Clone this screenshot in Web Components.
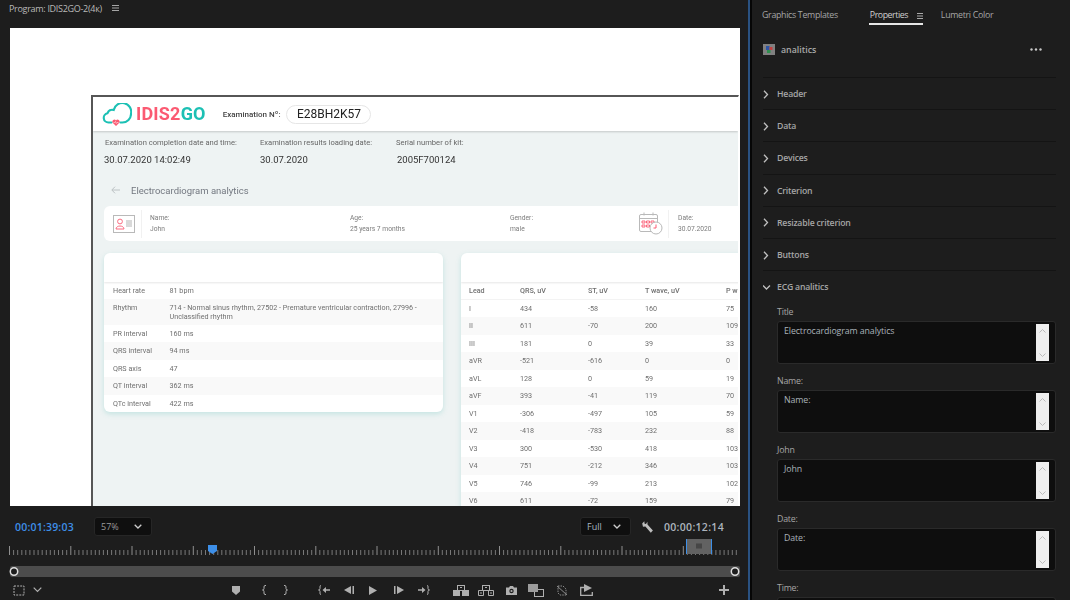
<!DOCTYPE html>
<html><head><meta charset="utf-8"><title>Program monitor</title>
<style>
html,body{margin:0;padding:0;background:#1d1d1d;width:1070px;height:600px;overflow:hidden}
body{font-family:"Open Sans","Liberation Sans",sans-serif}
</style></head>
<body>
<app-shell>
  <program-monitor slot="left" title-text="Program: IDIS2GO-2(4к)">
    <idis-page></idis-page>
  </program-monitor>
  <transport-bar slot="left"></transport-bar>
  <properties-panel slot="right">
    <prop-section name="Header"></prop-section>
    <prop-section name="Data"></prop-section>
    <prop-section name="Devices"></prop-section>
    <prop-section name="Criterion"></prop-section>
    <prop-section name="Resizable criterion"></prop-section>
    <prop-section name="Buttons"></prop-section>
    <prop-section name="ECG analitics" open>
      <prop-field label="Title" value="Electrocardiogram analytics"></prop-field>
      <prop-field label="Name:" value="Name:"></prop-field>
      <prop-field label="John" value="John"></prop-field>
      <prop-field label="Date:" value="Date:"></prop-field>
      <prop-field label="Time:" value=""></prop-field>
    </prop-section>
  </properties-panel>
</app-shell>
<script>
function def(name, html, init){
  customElements.define(name, class extends HTMLElement{
    connectedCallback(){
      if(this.shadowRoot) return;
      const r=this.attachShadow({mode:'open'});
      r.innerHTML = typeof html==='function' ? html(this) : html;
      if(init) init(r,this);
    }
  });
}
const esc=s=>(s||'').replace(/&/g,'&amp;').replace(/</g,'&lt;');

def('app-shell',`<style>
:host{display:flex;width:1070px;height:600px;background:#1d1d1d;overflow:hidden}
.l{width:748px;flex:none;display:flex;flex-direction:column}
.div{width:4px;flex:none;display:flex}
.div i{display:block;width:2px;background:#2a5282}
.div b{display:block;width:2px;background:#060606}
.r{flex:1;min-width:0}
</style><div class="l"><slot name="left"></slot></div><div class="div"><i></i><b></b></div><div class="r"><slot name="right"></slot></div>`);

def('program-monitor',h=>`<style>
:host{display:block;font-family:"Open Sans",sans-serif}
.t{height:28px;box-sizing:border-box;padding:2px 0 0 9px;display:flex;align-items:flex-start;gap:10px;color:#b9b9b9;font-size:9px;line-height:13px;letter-spacing:-.3px}
.t svg{margin-top:3px;flex:none}
.m{margin-left:10px;width:730px;height:478px;background:#fff;box-sizing:border-box;padding:67px 0 0 81px;overflow:hidden}
</style><div class="t"><span>${esc(h.getAttribute('title-text'))}</span>
<svg width="7" height="6" viewBox="0 0 7 6"><path d="M0 .5h7M0 3h7M0 5.500h7" stroke="#a5a5a5"/></svg></div>
<div class="m"><slot></slot></div>`);

def('idis-page',`<style>
:host{display:block;width:648px;height:411px;box-sizing:border-box;border-left:2px solid #565656;border-top:2px solid #565656;border-right:1.500px solid #fff;background:#eef3f3;font-family:Roboto,sans-serif;overflow:hidden;color:#666;filter:blur(.35px)}
.head{height:34px;background:#fff;box-sizing:border-box;display:flex;align-items:center;padding:0 0 0 9px;box-shadow:0 1px 2px rgba(0,0,0,.18)}
.word{font:700 18px/1 Roboto,sans-serif;color:#fb5a72;margin-left:4px;letter-spacing:.2px}
.word span{color:#1cc0b4}
.exn{margin-left:17px;font-size:8px;font-weight:500;color:#444}
.pill{margin-left:6px;width:85px;height:19px;border:1px solid #e6e6e6;border-radius:10px;box-sizing:border-box;display:flex;align-items:center;justify-content:center;font-size:12px;color:#222}
.info{display:flex;padding:6px 0 0 12px;height:53px;box-sizing:border-box}
.info div{font-size:7.600px;color:#666;line-height:12px}
.info b{display:block;font-weight:400;font-size:9.500px;color:#333;margin-top:5px;line-height:12px}
.info div:nth-child(1) b{margin-left:-1px}
.info div:nth-child(3) b{margin-left:1px}
.info div:nth-child(1){width:155px}.info div:nth-child(2){width:136px}
.title{display:flex;align-items:center;height:14px;margin:0 0 0 18px;font-size:9.500px;color:#737880;gap:11px;position:relative;top:-1px}
.pat{margin:8px 0 0 11px;width:700px;height:35px;background:#fff;border-radius:6px;box-sizing:border-box;display:flex;align-items:center;padding-left:9px;font-size:6.700px;color:#7d7d7d;line-height:10.500px}
.pat .sep{width:1px;height:28px;background:#f1f1f1;margin:0 8px 0 6px}
.pat .col b{display:block;font-weight:400}
.tables{display:grid;grid-template-columns:339px 400px;gap:18px;margin:12px 0 0 11px;align-items:start}
</style>
<div class="head">
<svg width="30" height="23" viewBox="0 0 30 23" fill="none"><path d="M9.500 19.500H6.500a4.700 4.700 0 0 1-1-9.300 5 5 0 0 1 6.200-3.300A8.600 8.600 0 0 1 29 10.800a8.600 8.600 0 0 1-8.600 8.700h-2" stroke="#1cc0b4" stroke-width="2.100" stroke-linecap="round"/><path d="M14 23l-3.300-3.300a2 2 0 0 1 3.300-2.300 2 2 0 0 1 3.300 2.300z" fill="#fb5a72"/><path d="M11.500 19.500h1.300l.7-1 .8 2 .7-1h1.500" stroke="#fff" stroke-width=".5"/></svg>
<div class="word">IDIS2<span>GO</span></div>
<div class="exn">Examination Nº:</div>
<div class="pill">E28BH2K57</div>
</div>
<div class="info">
<div>Examination completion date and time:<b>30.07.2020 14:02:49</b></div>
<div>Examination results loading date:<b>30.07.2020</b></div>
<div>Serial number of kit:<b>2005F700124</b></div>
</div>
<div class="title"><svg width="9" height="8" viewBox="0 0 9 8" fill="none"><path d="M9 4H1M4 .7 .8 4 4 7.300" stroke="#bcc2c4"/></svg><span>Electrocardiogram analytics</span></div>
<div class="pat">
<svg width="22" height="18" viewBox="0 0 22 18" fill="none"><rect x=".5" y=".5" width="21" height="17" fill="#fff" stroke="#b9b9b9"/><circle cx="7" cy="6.500" r="2.400" stroke="#fb6b80"/><path d="M3 14c0-4 8-4 8 0z" stroke="#fb6b80"/><rect x="13" y="5" width="6" height="7" fill="#d9d9d9"/></svg>
<div class="sep"></div>
<div class="col" style="width:200px">Name:<b>John</b></div>
<div class="col" style="width:160px">Age:<b>25 years 7 months</b></div>
<div class="col" style="width:129px">Gender:<b>male</b></div>
<svg width="24" height="23" viewBox="0 0 24 23" fill="none"><rect x=".5" y="2.500" width="18" height="17" rx="1.500" fill="#fff" stroke="#b9b9b9"/><path d="M.5 6.500h18M5 .5v3M14 .5v3" stroke="#b9b9b9"/><path d="M3 9h3v2H3zM7.500 9h3v2h-3zM12 9h3v2h-3zM3 13h3v2H3zM7.500 13h3v2h-3z" stroke="#fb5a72" stroke-width=".9"/><circle cx="17" cy="16" r="6" fill="#fff" stroke="#b9b9b9"/><path d="M17 12.500V16h-2.500" stroke="#fb5a72"/></svg>
<div class="sep" style="margin:0 9px 0 5px"></div>
<div class="col" style="width:60px">Date:<b>30.07.2020</b></div>
</div>
<div class="tables"><kv-table></kv-table><lead-table></lead-table></div>`);

const cardCss=`:host{display:block;background:#fff;border-radius:6px;overflow:hidden;box-shadow:0 2px 5px rgba(120,200,195,.35);font:7.200px/9px Roboto,sans-serif;color:#6f6f6f}
.h{height:28.500px;box-shadow:0 1px 2px rgba(0,0,0,.1);position:relative}
.row{display:flex;align-items:center;box-sizing:border-box;height:17.500px;padding-left:9px}
.row.s{background:#f9f9f9}`;
def('kv-table',h=>{
 const d=[['Heart rate','81 bpm'],['Rhythm','714 - Normal sinus rhythm, 27502 - Premature ventricular contraction, 27996 - Unclassified rhythm'],['PR interval','160 ms'],['QRS interval','94 ms'],['QRS axis','47'],['QT interval','362 ms'],['QTc interval','422 ms']];
 return `<style>${cardCss}
 .row span:first-child{width:56.500px;flex:none}.row span:last-child{width:262px}
 .row.tall{height:25.500px;align-items:flex-start;padding-top:4px}</style><div class="h"></div>`+d.map((r,i)=>`<div class="row ${i%2?'s':''} ${i==1?'tall':''}"><span>${r[0]}</span><span>${r[1]}</span></div>`).join('');
});
def('lead-table',h=>{
 const d=`I 434 -58 160 75|II 611 -70 200 109|III 181 0 39 33|aVR -521 -616 0 0|aVL 128 0 59 19|aVF 393 -41 119 70|V1 -306 -497 105 59|V2 -418 -783 232 88|V3 300 -530 418 103|V4 751 -212 346 103|V5 746 -99 213 102|V6 611 -72 159 79`.split('|').map(s=>s.split(' '));
 const c=r=>r.map(x=>`<span>${x}</span>`).join('');
 return `<style>${cardCss}
 :host{height:300px}
 .row span:nth-child(1){width:51px}.row span:nth-child(2){width:68px}.row span:nth-child(3){width:57px}.row span:nth-child(4){width:81px}.row span{flex:none;white-space:nowrap}
 .hd{font-weight:500;height:18px;border-bottom:1px solid #f3f3f3;padding-left:8px}.row{padding-left:8px}
 </style><div class="h"></div><div class="row hd">${c(['Lead','QRS, uV','ST, uV','T wave, uV','P wave, uV'])}</div>`+d.map((r,i)=>`<div class="row ${i%2?'s':''}">${c(r)}</div>`).join('');
});

def('transport-bar',`<style>
:host{display:block;height:94px;box-sizing:border-box;padding-top:11px;font-family:"Open Sans",sans-serif;color:#a8a8a8}
.top{display:flex;align-items:center;height:19px;padding-left:15px}
.tc{font-size:10.500px;font-weight:600;width:79px;letter-spacing:.2px}
.blue{color:#3d8fe8}
.dd{height:19px;background:#0f0f0f;border:1px solid #262626;border-radius:3px;box-sizing:border-box;display:flex;align-items:center;justify-content:space-between;padding:0 9px 0 6px;font-size:9px;color:#9a9a9a}
.gap{flex:1}
.tr{margin-left:11px;width:11px;height:12px;flex:none}
.tc2{margin-left:11px;width:70px;color:#adb5bd;font-weight:600;font-size:10.500px;letter-spacing:.3px;white-space:nowrap}
.ruler{display:block;margin-top:3px}
.sb{display:block;margin-top:10px}
.tools{display:flex;align-items:center;height:18px;margin-top:4px;padding-left:13px;width:735px;box-sizing:border-box}
.tools svg{flex:none;display:block}
</style>
<div class="top"><div class="tc blue">00:01:39:03</div>
<div class="dd" style="width:58px"><span>57%</span><svg width="8" height="5" viewBox="0 0 8 5" fill="none"><path d="M.7.700 4 4l3.300-3.300" stroke="#ccc" stroke-width="1.300"/></svg></div>
<div class="gap"></div>
<div class="dd" style="width:51px;color:#a9b4c0"><span>Full</span><svg width="8" height="5" viewBox="0 0 8 5" fill="none"><path d="M.7.700 4 4l3.300-3.300" stroke="#ccc" stroke-width="1.300"/></svg></div>
<svg class="tr" viewBox="0 0 11 12"><path d="M.2 2.600 2.300.3l.3 2.400 1.400.4L5.400.8 5.500 3.400l5.400 6-2.100 2.300-5.400-6.100-2.400.1z" fill="#bdbdbd"/></svg>
<div class="tc2">00:00:12:14</div><div style="width:14px"></div></div>
<svg id="ruler" class="ruler" width="748" height="17" viewBox="0 0 748 17"></svg>
<svg class="sb" width="748" height="11" viewBox="0 0 748 11"><rect x="10" width="730" height="11" rx="2" fill="#4c4c4c"/><circle cx="14" cy="5.500" r="3.700" fill="#1d1d1d" stroke="#e0e0e0" stroke-width="1.500"/><circle cx="735" cy="5.500" r="3.700" fill="#1d1d1d" stroke="#e0e0e0" stroke-width="1.500"/></svg>
<div class="tools">
<svg width="12" height="11" viewBox="0 0 12 11" fill="none" style="margin-right:8px"><path d="M1 1h10v9H1z" stroke="#b0b0b0" stroke-dasharray="2 1.100"/></svg>
<svg width="9" height="6" viewBox="0 0 9 6" fill="none" style="margin-right:190px"><path d="M.7.700 4.500 4.500 8.300.700" stroke="#b0b0b0" stroke-width="1.200"/></svg>
<svg width="8" height="9" viewBox="0 0 8 9" style="margin-right:22px"><path d="M0 0h8v5.500L4 9 0 5.500z" fill="#b0b0b0"/></svg>
<svg width="5" height="10" viewBox="0 0 5 10" fill="none" style="margin-right:16px"><path d="M4 .5H3Q2 .5 2 2v1.500Q2 5 .5 5 2 5 2 6.500V8q0 1.500 1 1.500h1" stroke="#b0b0b0"/></svg>
<svg width="5" height="10" viewBox="0 0 5 10" fill="none" style="margin-right:30px"><path d="M1 .5h1Q3 .5 3 2v1.500Q3 5 4.500 5 3 5 3 6.500V8q0 1.500-1 1.500H1" stroke="#b0b0b0"/></svg>
<svg width="12" height="10" viewBox="0 0 12 10" fill="none" style="margin-right:14px"><path d="M3 .5H2.500Q2 .5 2 2v1.500Q2 5 .5 5 2 5 2 6.500V8q0 1.500.5 1.500H3" stroke="#b0b0b0"/><path d="M12 4.300H8V2L4.500 5 8 8V5.700h4z" fill="#b0b0b0"/></svg>
<svg width="10" height="8" viewBox="0 0 10 8" style="margin-right:15px"><path d="M7 0v8L0 4zM8.500 0H10v8H8.500z" fill="#b0b0b0"/></svg>
<svg width="8" height="9" viewBox="0 0 8 9" style="margin-right:17px"><path d="M0 0l8 4.500L0 9z" fill="#b0b0b0"/></svg>
<svg width="10" height="8" viewBox="0 0 10 8" style="margin-right:14px"><path d="M3 0v8l7-4zM0 0h1.500v8H0z" fill="#b0b0b0"/></svg>
<svg width="12" height="10" viewBox="0 0 12 10" fill="none" style="margin-right:23px"><path d="M9 .5h.5Q10 .5 10 2v1.500Q10 5 11.500 5 10 5 10 6.500V8q0 1.500-.5 1.500H9" stroke="#b0b0b0"/><path d="M0 4.300h4V2l3.500 3L4 8V5.700H0z" fill="#b0b0b0"/></svg>
<svg width="16" height="11" viewBox="0 0 16 11" fill="none" style="margin-right:9px"><rect x="4.500" y=".5" width="7" height="5" stroke="#b0b0b0"/><path d="M7 2.500h2" stroke="#b0b0b0"/><path d="M0 5h7v6H0zM9 5h7v6H9z" fill="#b0b0b0"/></svg>
<svg width="16" height="11" viewBox="0 0 16 11" fill="none" style="margin-right:12px"><rect x="4.500" y=".5" width="7" height="5" stroke="#b0b0b0"/><path d="M7 2.500h2" stroke="#b0b0b0"/><path d="M.5 5.500h5v5h-5zM10.500 5.500h5v5h-5z" stroke="#b0b0b0"/><path d="M2 8h2M12 8h2" stroke="#b0b0b0"/></svg>
<svg width="11" height="9" viewBox="0 0 11 9" style="margin-right:11px"><path d="M0 1.500h3L4 0h3l1 1.500h3V9H0z" fill="#b0b0b0"/><circle cx="5.500" cy="5" r="2.200" fill="#1d1d1d"/><circle cx="5.500" cy="5" r="1.100" fill="#b0b0b0"/></svg>
<svg width="16" height="13" viewBox="0 0 16 13" fill="none" style="margin-right:13px"><rect x="6.500" y="5.500" width="9" height="7" stroke="#b0b0b0"/><rect width="10" height="8" fill="#9c9c9c"/></svg>
<svg width="10" height="11" viewBox="0 0 10 11" fill="none" style="margin-right:13px"><path d="M1 1h5l3 3v6H3L1 8z" stroke="#8c8c8c" stroke-dasharray="1.500 1"/><path d="M0 1l10 9" stroke="#8c8c8c"/></svg>
<svg width="13" height="12" viewBox="0 0 13 12" fill="none" style="margin-right:126px"><path d="M4 3.500H.7v7.800h11.600V8" stroke="#b0b0b0" stroke-width="1.300"/><path d="M4 0l8 4-8 4z" fill="#b0b0b0"/></svg>
<svg width="10" height="10" viewBox="0 0 10 10"><path d="M4 0h2v4h4v2H6v4H4V6H0V4h4z" fill="#b0b0b0"/></svg>
</div>`,
(r)=>{
 let s='';
 for(let i=0;i<180;i++){
   const x=9.5+i*61.25/15;
   if(x>740) break;
   const maj=i%15===0;
   s+=`<path d="M${x.toFixed(1)} ${maj?7:11}V16" stroke="#8f8f8f" stroke-width="1" ${maj?'':'opacity=".8"'}/>`;
 }
 s+=`<rect x="686" y="0" width="26" height="15" fill="#626262"/><path d="M686.500 0V15M711.500 0V15" stroke="#3d8fe8"/><path d="M697 4.500v5M699 4.500v5M701 4.500v5" stroke="#2a2a2a"/>`;
 s+=`<path d="M208 6h9v6l-3 2-1.500 1-1.500-1-3-2z" fill="#3d8fe8"/>`;
 r.getElementById('ruler').innerHTML=s;
});

def('properties-panel',`<style>
:host{display:block;height:600px;overflow:hidden;font-family:"Open Sans",sans-serif;color:#a8a8a8}
.tabs{display:flex;height:25px;padding-left:10px;box-sizing:border-box;font-size:8.800px;line-height:12px;letter-spacing:-.3px}
.tab{padding-top:9px;white-space:nowrap;color:#a6a6a6;flex:none}
.on{margin-left:31px;width:54px;border-bottom:2px solid #e6e6e6;box-sizing:border-box;display:flex;color:#cfcfcf;padding-left:1px;letter-spacing:-.45px}
.on span{width:47px;flex:none}
.on svg{margin-top:4px;flex:none}
.asset{display:flex;align-items:center;height:52px;padding:0 28px 3px 11px;box-sizing:border-box;font-size:8.800px;font-weight:600;color:#a9a9a9}
.asset span{margin-left:6px;flex:1}
.asset svg{flex:none}
</style>
<div class="tabs"><div class="tab">Graphics Templates</div><div class="tab on"><span>Properties</span><svg width="6" height="6" viewBox="0 0 6 6"><path d="M0 .5h6M0 3h6M0 5.500h6" stroke="#aaa"/></svg></div><div class="tab" style="margin-left:18px">Lumetri Color</div></div>
<div class="asset"><svg width="12" height="11" viewBox="0 0 12 11"><rect width="12" height="11" fill="#808080"/><rect x="3" y="2" width="3.500" height="4" fill="#2d55a5"/><rect x="6.500" y="3" width="3" height="3" fill="#c24040"/><rect x="4" y="6" width="3.500" height="3" fill="#2f8f4f"/></svg><span>analitics</span><svg width="12" height="3" viewBox="0 0 12 3"><circle cx="1.500" cy="1.500" r="1.200" fill="#c8c8c8"/><circle cx="6" cy="1.500" r="1.200" fill="#c8c8c8"/><circle cx="10.500" cy="1.500" r="1.200" fill="#c8c8c8"/></svg></div>
<slot></slot>`);

def('prop-section',h=>{
 const open=h.hasAttribute('open');
 return `<style>
:host{display:block;margin:0 14px 0 11px;border-top:1px solid #141414}
.h{display:flex;align-items:center;height:31.200px;padding-top:1px;box-sizing:border-box;font-size:8.700px;font-weight:600;color:#a6a6a6;letter-spacing:-.2px}
.h svg{width:14px;flex:none}
.b{padding-left:14px;margin-top:1px}
</style><div class="h"><svg height="9" viewBox="0 0 14 9" fill="none">${open?'<path d="M0 2.500 3.500 6 7 2.500" stroke="#c0c0c0" stroke-width="1.300"/>':'<path d="M1 .8 4.500 4.500 1 8.200" stroke="#c0c0c0" stroke-width="1.300"/>'}</svg><span>${esc(h.getAttribute('name'))}</span></div>${open?'<div class="b"><slot></slot></div>':''}`;
});

def('prop-field',h=>`<style>
:host{display:block;height:69px;font-size:8.800px;color:#a6a6a6}
.l{height:18px;line-height:12px;padding-top:3px;box-sizing:border-box;letter-spacing:-.2px}
.a{height:43px;background:#0e0e0e;border:1px solid #2a2a2a;border-radius:3px;box-sizing:border-box;display:flex;justify-content:space-between;padding:2px 6px 2px 6px;color:#a9b2ba;line-height:14px;letter-spacing:-.1px}
.s{width:13px;background:#efefef;display:flex;flex-direction:column;justify-content:space-between;align-items:center;padding:5px 0 4px;box-sizing:border-box;flex:none}
</style><div class="l">${esc(h.getAttribute('label'))}</div><div class="a"><span>${esc(h.getAttribute('value'))}</span><div class="s"><svg width="7" height="4" viewBox="0 0 7 4" fill="none"><path d="M.5 3.500 3.500.5l3 3" stroke="#bbb"/></svg><svg width="7" height="4" viewBox="0 0 7 4" fill="none"><path d="M.5.500l3 3 3-3" stroke="#bbb"/></svg></div></div>`);
</script>
</body></html>
